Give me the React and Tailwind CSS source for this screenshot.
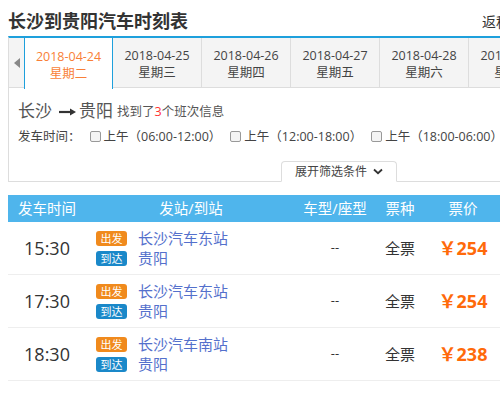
const tabs = [
  { date: '2018-04-24', week: '星期二', active: true },
  { date: '2018-04-25', week: '星期三' },
  { date: '2018-04-26', week: '星期四' },
  { date: '2018-04-27', week: '星期五' },
  { date: '2018-04-28', week: '星期六' },
  { date: '2018-04-29', week: '星期日' },
];

const filters = ['06:00-12:00', '12:00-18:00', '18:00-06:00'];

const rows = [
  { time: '15:30', from: '长沙汽车东站', to: '贵阳', price: '254' },
  { time: '17:30', from: '长沙汽车东站', to: '贵阳', price: '254' },
  { time: '18:30', from: '长沙汽车南站', to: '贵阳', price: '238' },
];

const font = { fontFamily: '"Open Sans", "Noto Sans CJK SC", sans-serif' };

function Checkbox() {
  return <span className="inline-block w-[11px] h-[11px] border border-[#999] rounded-[2px] bg-[#f4f4f4] mr-[3px] translate-y-[-1px]" />;
}

export default function App() {
  return (
    <div className="w-[500px] h-[396px] overflow-hidden bg-white text-[#333]" style={font}>
      <div className="w-[560px] pl-2">
        <div className="flex items-end justify-between h-[36px] pb-[6px]">
          <h1 className="text-[18px] font-bold leading-none text-[#333]">长沙到贵阳汽车时刻表</h1>
          <span className="text-[14px] leading-none text-[#333] mr-[50px] pb-[1px]">返程</span>
        </div>

        <div className="border-t-2 border-[#1ea0dc] border-l border-b border-l-[#ddd] border-b-[#ddd] relative">
          <div className="flex h-[50px] border-b border-[#ddd] bg-[#f4f4f4]">
            <div className="w-[15px] flex items-center justify-center">
              <span className="w-0 h-0 border-y-[5px] border-y-transparent border-r-[6px] border-r-[#888]" />
            </div>
            {tabs.map(t => (
              <div
                key={t.date}
                className={`w-[89px] flex flex-col items-center justify-center pt-[2px] text-[12.5px] leading-[17px] ${t.active ? 'bg-white text-[#f97f37] border-x border-[#1ea0dc] h-[51px]' : 'border-r border-[#ddd] text-[#444]'}`}
              >
                <span>{t.date}</span>
                <span>{t.week}</span>
              </div>
            ))}
          </div>

          <div className="px-[9px] pt-[12px] h-[93px]">
            <div className="flex items-end">
              <span className="text-[17px] leading-[22px] text-[#555]">长沙</span>
              <svg className="ml-[7px] mr-[3px] mb-[6px]" width="17" height="8" viewBox="0 0 17 8">
                <path d="M0 4 H12" stroke="#333" strokeWidth="2.2" />
                <path d="M11 0.5 L17 4 L11 7.5 Z" fill="#333" />
              </svg>
              <span className="text-[17px] leading-[22px] text-[#555]">贵阳</span>
              <span className="text-[12.5px] leading-[20px] text-[#555] ml-[4px]">
                找到了<span className="text-[#f33]">3</span>个班次信息
              </span>
            </div>
            <div className="flex items-center text-[12.5px] text-[#444] mt-[6px] whitespace-nowrap">
              <span className="mr-[9px]">发车时间：</span>
              {filters.map(f => (
                <span key={f} className="flex items-center mr-[9px]">
                  <Checkbox />
                  上午（{f}）
                </span>
              ))}
            </div>
          </div>

          <div className="absolute left-[272px] bottom-[-1px] w-[116px] h-[21px] border border-[#ddd] border-b-white rounded-t-[4px] bg-white flex items-center justify-center gap-[6px] text-[12px] text-[#444]">
            <span>展开筛选条件</span>
            <svg width="10" height="7" viewBox="0 0 10 7">
              <path d="M1 1.5 L5 5.2 L9 1.5" fill="none" stroke="#333" strokeWidth="1.8" />
            </svg>
          </div>
        </div>

        <div className="mt-[13px] w-[492px]">
          <div className="grid grid-cols-[78px_210px_78px_52px_74px] h-[27px] items-center bg-[#4fb5ec] text-white text-[14.5px]">
            <span className="text-center">发车时间</span>
            <span className="text-center">发站/到站</span>
            <span className="text-center">车型/座型</span>
            <span className="text-center">票种</span>
            <span className="text-center">票价</span>
          </div>
          {rows.map(r => (
            <div key={r.time} className="grid grid-cols-[78px_210px_78px_52px_74px] h-[53px] items-center border-b border-[#eee]">
              <span className="text-center text-[18px] text-[#333]">{r.time}</span>
              <div className="flex flex-col gap-[4px] pl-[10px]">
                <div className="flex items-center">
                  <span className="w-[31px] h-[15px] rounded-[3px] bg-[#f08a1d] text-white text-[11px] leading-[15px] text-center">出发</span>
                  <span className="ml-[11px] text-[15px] leading-[16px] text-[#5470cc]">{r.from}</span>
                </div>
                <div className="flex items-center">
                  <span className="w-[31px] h-[15px] rounded-[3px] bg-[#1a88c9] text-white text-[11px] leading-[15px] text-center">到达</span>
                  <span className="ml-[11px] text-[15px] leading-[16px] text-[#5470cc]">{r.to}</span>
                </div>
              </div>
              <span className="text-center text-[13px] text-[#333]">--</span>
              <span className="text-center text-[15px] text-[#333]">全票</span>
              <span className="text-center text-[18px] font-bold text-[#ff6a0a]">￥{r.price}</span>
            </div>
          ))}
        </div>
      </div>
    </div>
  );
}
